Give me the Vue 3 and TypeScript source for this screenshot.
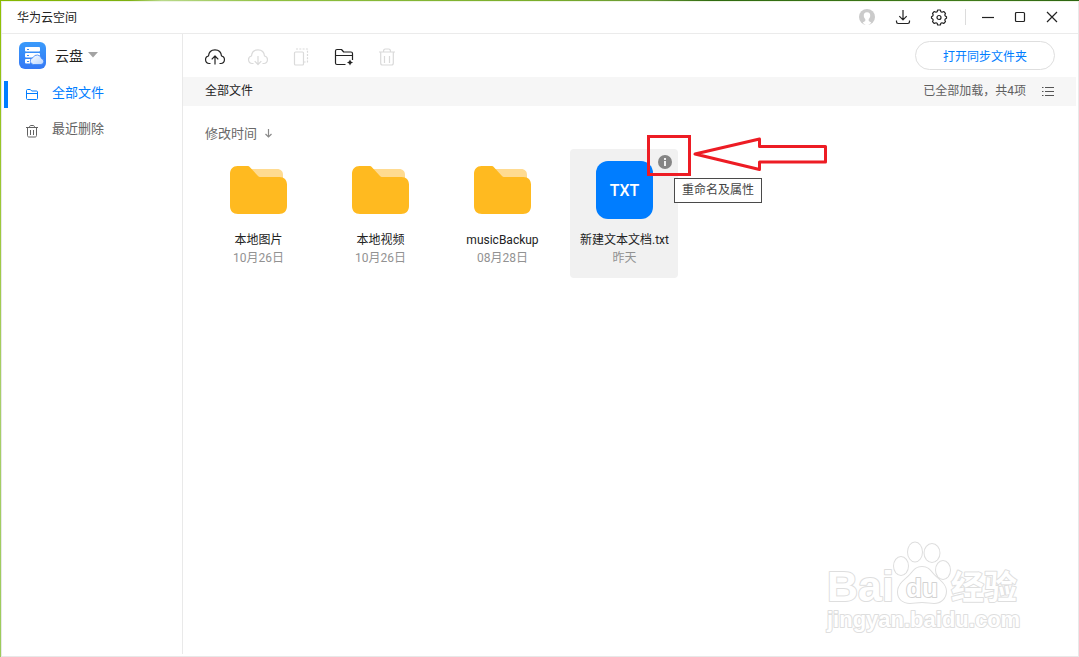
<script setup lang="ts">
import { ref } from 'vue'

interface FileItem {
  name: string
  date: string
  kind: 'folder' | 'text'
}

const files: FileItem[] = [
  { name: '本地图片', date: '10月26日', kind: 'folder' },
  { name: '本地视频', date: '10月26日', kind: 'folder' },
  { name: 'musicBackup', date: '08月28日', kind: 'folder' },
  { name: '新建文本文档.txt', date: '昨天', kind: 'text' },
]

const section = ref<'all' | 'recent'>('all')
</script>

<template>
  <div class="desktop">
    <div class="window">
      <header class="titlebar">
        <h1 class="title">华为云空间</h1>
        <div class="title-actions">
          <button class="icon-btn" aria-label="账号">
            <svg width="18" height="18" viewBox="0 0 18 18">
              <circle cx="9" cy="9" r="8" fill="#cbcbcb" />
              <path d="M9 4.200c2.400 0 3.400 1.600 3.200 3.700-.1 1.400-.8 2.500-1.500 3.200v1.700c0 .7 1.600 1 2.500 1.600C12 16.200 10.600 17 9 17s-3-.8-4.200-2.600c.9-.6 2.500-.9 2.500-1.600v-1.700c-.7-.7-1.400-1.800-1.500-3.200C5.600 5.800 6.600 4.200 9 4.200z" fill="#fff" />
            </svg>
          </button>
          <button class="icon-btn" aria-label="传输列表">
            <svg width="18" height="18" viewBox="0 0 18 18" class="line">
              <path d="M9 2v9.500M5.300 8.200 9 11.900l3.700-3.700M2.500 12.500v1.300c0 1 .7 1.700 1.700 1.700h9.600c1 0 1.700-.7 1.700-1.700v-1.300" />
            </svg>
          </button>
          <button class="icon-btn" aria-label="设置">
            <svg width="18" height="18" viewBox="0 0 18 18" class="line">
              <path d="M7.700 2h2.600l.6 1.700 1.100.5 1.700-.7 1.800 1.800-.7 1.700.5 1 1.200.7v1.600l-1.200.7-.5 1 .7 1.700-1.800 1.800-1.700-.7-1.100.5-.6 1.700H7.700l-.6-1.700-1.100-.5-1.700.7-1.800-1.800.7-1.700-.5-1-1.200-.7V8.700L2.700 8l.5-1-.7-1.700 1.800-1.800 1.700.7 1.100-.5z" />
              <circle cx="9" cy="9.500" r="2" />
            </svg>
          </button>
          <span class="divider"></span>
          <button class="icon-btn" aria-label="最小化">
            <svg width="14" height="14" viewBox="0 0 14 14" class="line"><path d="M1 7.500h12" /></svg>
          </button>
          <button class="icon-btn" aria-label="最大化">
            <svg width="14" height="14" viewBox="0 0 14 14" class="line"><rect x="2.500" y="2.500" width="9" height="9" rx="1" /></svg>
          </button>
          <button class="icon-btn" aria-label="关闭">
            <svg width="14" height="14" viewBox="0 0 14 14" class="line"><path d="m2 2 10 10M12 2 2 12" /></svg>
          </button>
        </div>
      </header>

      <div class="body">
        <aside class="sidebar">
          <button class="switcher">
            <svg width="27" height="27" viewBox="0 0 27 27">
              <defs>
                <linearGradient id="brandFill" x1="0" y1="0" x2="0" y2="1">
                  <stop offset="0" stop-color="#3a9bfb" />
                  <stop offset="1" stop-color="#3478f5" />
                </linearGradient>
                <linearGradient id="cloudFill" x1="0" y1="0" x2="1" y2="1">
                  <stop offset="0" stop-color="#fff" />
                  <stop offset="1" stop-color="#b6d3ff" />
                </linearGradient>
              </defs>
              <rect width="27" height="27" rx="6" fill="url(#brandFill)" />
              <g fill="#fff">
                <rect x="6" y="5" width="15" height="4.500" rx="1" />
                <rect x="6" y="11" width="15" height="4.500" rx="1" />
                <path d="M7 17h6l-2 4.500H7a1 1 0 0 1-1-1V18a1 1 0 0 1 1-1z" />
              </g>
              <g fill="#3a8af8">
                <rect x="8" y="7" width="2" height="1" /><rect x="8" y="13" width="2" height="1" /><rect x="8" y="19" width="2" height="1" />
              </g>
              <path d="M14.500 22.500a3.500 3.500 0 0 1-.5-6.900 4.500 4.500 0 0 1 8.500 1 3 3 0 0 1-.5 5.900z" fill="url(#cloudFill)" stroke="#3a82f7" stroke-width=".8" />
            </svg>
            <span>云盘</span>
            <svg width="10" height="6" viewBox="0 0 10 6"><path d="M0 0h10L5 5.500z" fill="#a3a3a3" /></svg>
          </button>
          <nav class="nav">
            <a href="#all" class="nav-item" :class="{ active: section === 'all' }" @click.prevent="section = 'all'">
              <svg width="14" height="14" viewBox="0 0 14 14" class="nav-icon">
                <path d="M1.500 10.500v-8c0-.6.400-1 1-1h2.800l1.400 1.500h4.800c.6 0 1 .4 1 1v6.500c0 .6-.4 1-1 1h-9c-.6 0-1-.4-1-1zM1.500 5.500h11" />
              </svg>
              <span>全部文件</span>
            </a>
            <a href="#recent" class="nav-item" :class="{ active: section === 'recent' }" @click.prevent="section = 'recent'">
              <svg width="14" height="14" viewBox="0 0 14 14" class="nav-icon">
                <path d="M1 3.500h12M4.500 3.300C4.500 2 5 1.500 6 1.500h2c1 0 1.500.5 1.500 1.800M2.500 3.500v8c0 .9.500 1.500 1.400 1.500h6.200c.9 0 1.400-.6 1.400-1.500v-8M5.500 6v5M8.500 6v5" />
              </svg>
              <span>最近删除</span>
            </a>
          </nav>
        </aside>

        <main class="content">
          <div class="toolbar">
            <div class="tools">
              <button class="icon-btn tool" aria-label="上传">
                <svg width="22" height="22" viewBox="0 0 22 22" class="line">
                  <path d="M6.500 17.500H5.200a3.800 3.800 0 0 1-.7-7.500C4.800 6 7.300 3.800 11 3.800S17.200 6 17.500 10a3.800 3.800 0 0 1-.7 7.500h-1.300M11 18.500v-8M7.700 13.300 11 10l3.300 3.300" />
                </svg>
              </button>
              <button class="icon-btn tool" aria-label="下载" disabled>
                <svg width="22" height="22" viewBox="0 0 22 22" class="line">
                  <path d="M6.500 17.500H5.200a3.800 3.800 0 0 1-.7-7.500C4.800 6 7.300 3.800 11 3.800S17.200 6 17.500 10a3.800 3.800 0 0 1-.7 7.500h-1.300M11 10v8M7.700 15.200 11 18.500l3.300-3.300" />
                </svg>
              </button>
              <button class="icon-btn tool" aria-label="复制" disabled>
                <svg width="22" height="22" viewBox="0 0 22 22" class="line">
                  <rect x="4.500" y="6" width="9" height="13" rx="1" />
                  <path d="M6 3h11.500V16H14" stroke-dasharray="2 1.300" />
                </svg>
              </button>
              <button class="icon-btn tool" aria-label="新建文件夹">
                <svg width="22" height="22" viewBox="0 0 22 22" class="line">
                  <path d="M12.500 18.500H4c-.9 0-1.500-.6-1.500-1.500V5c0-.9.600-1.500 1.500-1.500h4.500L10.700 6H18c.9 0 1.500.6 1.500 1.500V14M2.500 9.500h17" />
                  <path d="m17 13.500 1 2 2 1-2 1-1 2-1-2-2-1 2-1z" fill="currentColor" stroke="none" />
                </svg>
              </button>
              <button class="icon-btn tool" aria-label="删除" disabled>
                <svg width="22" height="22" viewBox="0 0 22 22" class="line">
                  <path d="M3 6h16M7.500 5.500c0-1.700.6-2.500 1.800-2.500h3.400c1.200 0 1.800.8 1.800 2.500M4.700 6v11c0 1.300.7 2 1.800 2h9c1.100 0 1.800-.7 1.800-2V6M8.500 10v7M13.500 10v7" />
                </svg>
              </button>
            </div>
            <button class="sync">打开同步文件夹</button>
          </div>

          <div class="pathbar">
            <span class="crumb">全部文件</span>
            <span class="count">已全部加载，共4项</span>
            <button class="icon-btn list" aria-label="列表视图">
              <svg width="14" height="14" viewBox="0 0 14 14" class="line">
                <path d="M4 2.500h9M4 6.500h9M4 10.500h9M1 2.500h1.500M1 6.500h1.500M1 10.500h1.500" />
              </svg>
            </button>
          </div>

          <button class="sort">
            <span>修改时间</span>
            <svg width="9" height="10" viewBox="0 0 9 10"><path d="M4.500 1v8M1.500 6l3 3 3-3" fill="none" stroke="#8a8a8a" stroke-width="1.200" /></svg>
          </button>

          <ul class="files">
            <li v-for="file in files" :key="file.name" class="file" :class="{ hovered: file.kind === 'text' }">
              <svg v-if="file.kind === 'folder'" width="58" height="58" viewBox="0 0 58 58" class="thumb">
                <path d="M16 8h32c4 0 6 2.500 6 6v6H20z" fill="#ffdb91" />
                <path d="M8.500 5h10c1 0 1.600.3 2.200 1L29 15c.8.9 1.300 1 2.300 1h19c5 0 7.700 3 7.700 7.500V45c0 5-3 8-8 8H9c-5 0-8-3-8-8V13c0-5 3-8 7.500-8z" fill="#ffba20" />
              </svg>
              <div v-else class="thumb doc"><span>TXT</span></div>
              <span class="name">{{ file.name }}</span>
              <span class="date">{{ file.date }}</span>

              <template v-if="file.kind === 'text'">
                <button class="icon-btn info" aria-label="重命名及属性">
                  <svg width="14" height="14" viewBox="0 0 14 14">
                    <circle cx="7" cy="7" r="7" fill="#858585" />
                    <path d="M6 3h2v2H6zM6 6h2v5H6z" fill="#f1f1f1" />
                  </svg>
                </button>
                <svg class="marker" width="182" height="44" viewBox="0 0 182 44" fill="none" stroke="#ed1c24" stroke-width="3">
                  <rect x="2.500" y="3.500" width="41" height="38" />
                  <path d="M49 21 113.500 6v7.500h66V29h-66v7.500z" stroke-linejoin="round" />
                </svg>
                <div class="tooltip" role="tooltip">重命名及属性</div>
              </template>
            </li>
          </ul>
        </main>
      </div>

      <svg class="watermark" width="200" height="100" viewBox="0 0 200 100">
        <g fill="#fff" stroke="#dedede" stroke-width="2" stroke-linejoin="round" paint-order="stroke">
          <text x="4" y="65" font-size="43" class="mark">Bai</text>
          <ellipse cx="78" cy="30" rx="7" ry="9" />
          <ellipse cx="92" cy="16" rx="7" ry="9.500" />
          <ellipse cx="109" cy="17" rx="7.500" ry="9" />
          <ellipse cx="120" cy="34" rx="7" ry="9" />
          <path d="M99 31c7 0 9 5 13 9s11 8 11 15c0 8-6 12-12 12-4 0-7-1-12-1s-8 1-12 1c-7 0-12-4-12-11 0-8 7-12 11-16s6-9 13-9z" />
          <text x="83" y="61" font-size="26" class="mark" stroke="#d2d2d2">du</text>
          <text x="128" y="63" font-size="33" class="mark">经验</text>
          <text x="4" y="91" font-size="22" class="mark">jingyan.baidu.com</text>
        </g>
      </svg>
    </div>
  </div>
</template>

<style>
body {
  margin: 0;
}
</style>

<style scoped>
.desktop {
  box-sizing: border-box;
  min-height: 100vh;
  padding: 1px 0 0 1px;
  display: flex;
  background:
    linear-gradient(90deg, #86b800 0, #7db010 12%, #b9d98a 15%, #8fc040 25%, #7aad2a 50%, #6a9a35 60%, #2f6a10 66%, #3f7a1a 90%, #2c6410 100%) top / 100% 1px no-repeat,
    linear-gradient(180deg, #8fc000 0, #a8cf6a 60%, #9ccb5a 100%);
  font-family: Roboto, "Noto Sans CJK SC", sans-serif;
  font-size: 12px;
  color: #222;
}
.window {
  box-sizing: border-box;
  flex: 1;
  min-width: 0;
  position: relative;
  display: flex;
  flex-direction: column;
  background: #fff;
  border: 1px solid #e8e8e8;
  border-top-color: #eef5e4;
}
button {
  margin: 0;
  padding: 0;
  border: 0;
  background: none;
  font: inherit;
  color: inherit;
}
svg {
  display: block;
}
.line {
  fill: none;
  stroke: currentColor;
  stroke-width: 1.2;
  stroke-linejoin: round;
}
.icon-btn {
  display: flex;
  align-items: center;
  justify-content: center;
  flex: none;
}
.titlebar {
  box-sizing: border-box;
  display: flex;
  align-items: center;
  justify-content: space-between;
  height: 32px;
  padding: 0 19px 2px 15px;
  border-bottom: 1px solid #ebebeb;
}
.title {
  margin: 0;
  font-size: 12px;
  font-weight: 400;
}
.title-actions {
  display: flex;
  align-items: center;
  gap: 18px;
}
.divider {
  width: 1px;
  height: 16px;
  margin: 0 -3px 0 -1px;
  background: #dcdcdc;
}
.body {
  flex: 1;
  display: flex;
}
.sidebar {
  box-sizing: border-box;
  flex: none;
  width: 181px;
  margin-bottom: 2px;
  border-right: 1px solid #e9e9e9;
}
.switcher {
  display: flex;
  align-items: center;
  gap: 5px;
  height: 42px;
  padding-left: 17px;
  font-size: 14px;
}
.switcher span {
  padding-left: 4px;
}
.nav {
  display: flex;
  flex-direction: column;
  gap: 9px;
  padding: 5px 0 0 2px;
}
.nav-item {
  box-sizing: border-box;
  display: flex;
  align-items: center;
  gap: 13px;
  height: 27px;
  padding-left: 17px;
  border-left: 4px solid transparent;
  font-size: 13px;
  line-height: 24px;
  color: #626262;
  text-decoration: none;
}
.nav-item span {
  padding-bottom: 4px;
}
.nav-item.active {
  color: #007dff;
  border-left-color: #007dff;
}
.nav-icon {
  fill: none;
  stroke: currentColor;
  stroke-width: 1;
}
.content {
  flex: 1;
  min-width: 0;
  padding-right: 2px;
}
.toolbar {
  display: flex;
  align-items: center;
  justify-content: space-between;
  height: 43px;
  padding: 0 21px;
}
.tools {
  display: flex;
  gap: 21px;
  padding-top: 2px;
}
.tool:disabled {
  color: #dadada;
}
.sync {
  width: 140px;
  height: 29px;
  border: 1px solid #dedede;
  border-radius: 15px;
  color: #007dff;
}
.pathbar {
  box-sizing: border-box;
  display: flex;
  align-items: center;
  height: 29px;
  padding: 0 21px 0 22px;
  background: #f6f6f6;
}
.crumb {
  flex: 1;
  padding-bottom: 4px;
}
.count {
  padding-bottom: 4px;
  margin-right: 15px;
  color: #5f5f5f;
}
.list {
  color: #555;
}
.sort {
  display: flex;
  align-items: center;
  gap: 7px;
  height: 43px;
  padding: 10px 0 0 22px;
  box-sizing: border-box;
  font-size: 13px;
  color: #686868;
}
.files {
  display: flex;
  flex-wrap: wrap;
  gap: 14px;
  margin: 0;
  padding: 0 21px;
  list-style: none;
}
.file {
  position: relative;
  box-sizing: border-box;
  display: flex;
  flex-direction: column;
  align-items: center;
  width: 108px;
  height: 129px;
  padding-top: 12px;
  border-radius: 4px;
}
.hovered {
  background: #f1f1f1;
}
.thumb {
  width: 58px;
  height: 58px;
  margin-bottom: 12px;
}
.doc {
  display: flex;
  align-items: center;
  justify-content: center;
  width: 57px;
  margin-left: 1px;
  border-radius: 12px;
  background: #007dff;
  color: #fff;
  font-size: 16px;
  font-weight: 500;
}
.name,
.date {
  padding-left: 1px;
  line-height: 18px;
  white-space: nowrap;
}
.date {
  color: #929292;
}
.info {
  position: absolute;
  top: 6px;
  right: 6px;
}
.marker {
  position: absolute;
  top: -16px;
  left: 76px;
  pointer-events: none;
}
.tooltip {
  position: absolute;
  top: 29px;
  left: 104px;
  padding: 0 7px;
  border: 1px solid #4a4a4a;
  background: #fff;
  line-height: 23px;
  white-space: nowrap;
  color: #444;
}
.watermark {
  position: absolute;
  right: 55px;
  bottom: 20px;
  pointer-events: none;
}
.mark {
  font-family: "Liberation Sans", "Noto Sans CJK SC", sans-serif;
  font-weight: 700;
}
</style>
